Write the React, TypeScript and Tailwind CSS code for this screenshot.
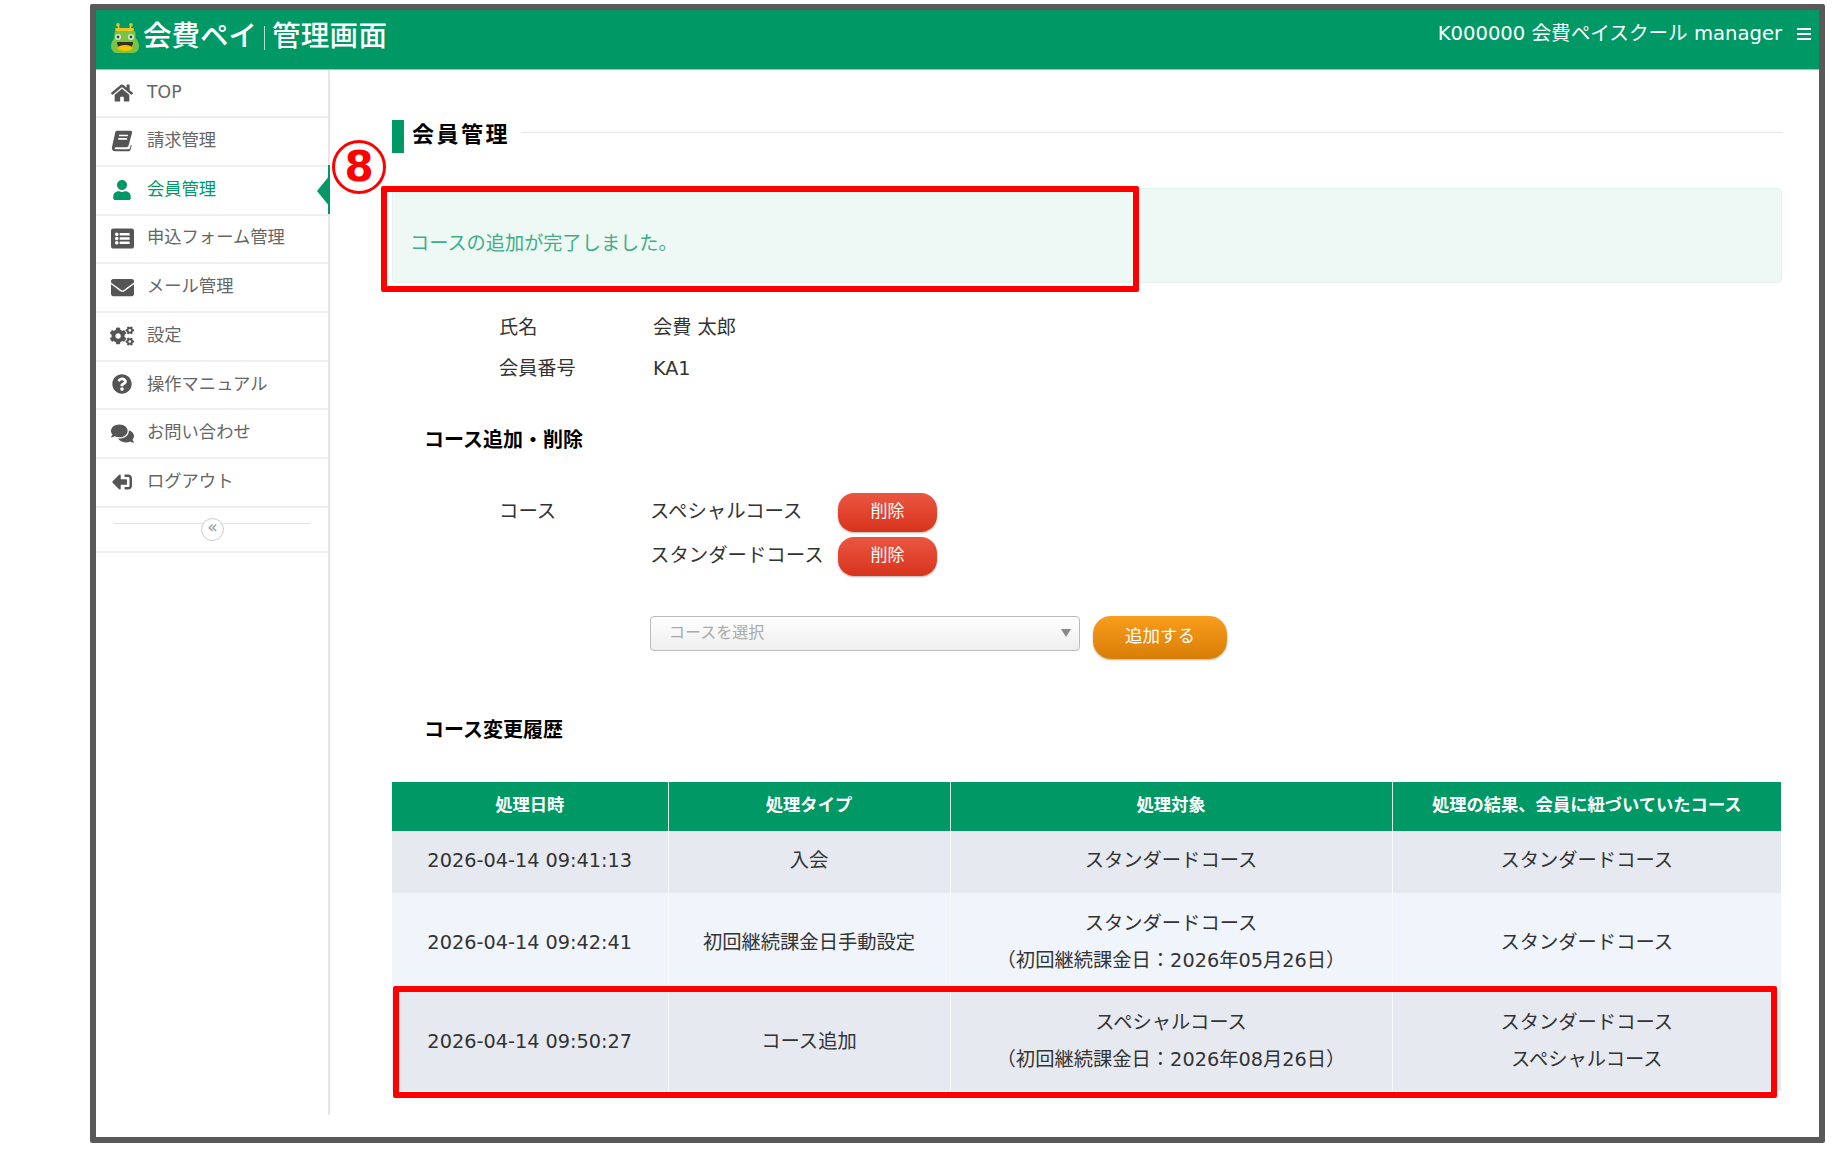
import { FaComments, FaCogs, FaEnvelope, FaHome, FaListAlt, FaQuestionCircle, FaSignOutAlt, FaUser } from "react-icons/fa"

const BookIcon = () => (
  <svg viewBox="0 0 26 26" className="h-[22px] w-[22px]" fill="currentColor">
    <path d="M7 1h16c1.5 0 2.200 1 1.800 2.400l-4 15c-.4 1.400-1.400 2.100-2.800 2.100H6c-1.600 0-2 .9-1.700 1.500.2.500.8.800 1.500.800h15c.8 0 1.300-.4 1.500-1l1.200-4.300 1 .7-1.400 5.200c-.3 1-1.300 1.800-2.500 1.800H5.500C2.500 25.200.5 23 1.200 20L5 3c.2-1.100 1-2 2-2z" />
    <path d="M9.500 6.500h10.500M8.500 10.500h10.500" stroke="#fff" strokeWidth="2" />
  </svg>
)

const menuItems = [
  { name: "TOP", icon: <FaHome className="h-[22px] w-[22px]" /> },
  { name: "請求管理", icon: <BookIcon /> },
  { name: "会員管理", icon: <FaUser className="h-[20px] w-[20px]" />, active: true },
  { name: "申込フォーム管理", icon: <FaListAlt className="h-[23px] w-[23px]" /> },
  { name: "メール管理", icon: <FaEnvelope className="h-[23px] w-[23px]" /> },
  { name: "設定", icon: <FaCogs className="h-[24px] w-[24px]" /> },
  { name: "操作マニュアル", icon: <FaQuestionCircle className="h-[20px] w-[20px]" /> },
  { name: "お問い合わせ", icon: <FaComments className="h-[23px] w-[23px]" /> },
  { name: "ログアウト", icon: <FaSignOutAlt className="h-[20px] w-[20px] -scale-x-100" /> },
]

const historyRows = [
  {
    date: "2026-04-14 09:41:13",
    type: "入会",
    target: ["スタンダードコース"],
    result: ["スタンダードコース"],
    className: "h-[62px] bg-[#e6e9f0] [&>td]:pb-[4px]",
  },
  {
    date: "2026-04-14 09:42:41",
    type: "初回継続課金日手動設定",
    target: ["スタンダードコース", "（初回継続課金日：2026年05月26日）"],
    result: ["スタンダードコース"],
    className: "h-[98px] bg-[#f0f4fb]",
  },
  {
    date: "2026-04-14 09:50:27",
    type: "コース追加",
    target: ["スペシャルコース", "（初回継続課金日：2026年08月26日）"],
    result: ["スタンダードコース", "スペシャルコース"],
    className: "h-[100px] bg-[#e6e9f0]",
  },
]

// frog purse mark
const Logo = () => (
  <svg viewBox="0 0 28 30" className="h-[30px] w-[28px]">
    <path d="M8 6 7 2M19 6l1-4" stroke="#e8c520" strokeWidth="1.600" />
    <circle cx="7" cy="1.800" r="1.800" fill="#e8c520" />
    <circle cx="20" cy="1.800" r="1.800" fill="#e8c520" />
    <rect x="4" y="5" width="19" height="3" rx="1.500" fill="#e8c520" />
    <path d="M5 8h18c1 0 1.500 1 1.500 2v5c2 2 3.500 5 3.500 8 0 4-2.500 7-6 7H6c-3.500 0-6-3-6-7 0-3 1.500-6 3.500-8v-5c0-1 .5-2 1.500-2z" fill="#7cc243" />
    <circle cx="7" cy="14" r="3" fill="#d8ecd0" />
    <circle cx="20" cy="14" r="3" fill="#d8ecd0" />
    <circle cx="7" cy="14" r="1.400" fill="#2d4a3a" />
    <circle cx="20" cy="14" r="1.400" fill="#2d4a3a" />
    <path d="M6 19h16c0 4-3 8-8 8s-8-4-8-8z" fill="#33302a" />
    <ellipse cx="14" cy="25" rx="7.500" ry="3" fill="#f5c400" />
  </svg>
)

const SectionHeading = ({ children, className }: { children: string; className: string }) => (
  <h3 className={`ml-[32px] h-[28px] text-[20px] leading-[28px] font-bold text-black ${className}`}>{children}</h3>
)

const DeleteButton = () => (
  <button className="h-[39px] w-[99px] rounded-[16px] bg-gradient-to-b from-[#ea5640] to-[#d8321a] pb-[2px] text-[17px] text-white shadow-[0_1px_2px_rgba(0,0,0,0.3)]">
    削除
  </button>
)

export default function App() {
  return (
    <div className="h-[1149px] w-[1832px] bg-white pt-[4px] pl-[90px] font-['DejaVu_Sans','Noto_Sans_CJK_JP',sans-serif] text-[#333]">
      <div className="flex h-[1139px] w-[1735px] flex-col rounded-[2px] border-[6px] border-[#595959]">
        <header className="flex h-[60px] items-center justify-between border-b border-[#7fd0b4] bg-[#009966] text-white">
          <div className="flex items-center pb-[4px] pl-[15px]">
            <Logo />
            <span className="ml-[4px] text-[28.500px] leading-none font-medium">会費ペイ</span>
            <span className="mx-[7px] h-[24px] w-px bg-white/70" />
            <span className="text-[28.500px] leading-none font-medium tracking-[0.300px]">管理画面</span>
          </div>
          <div className="flex items-center pb-[11px]">
            <span className="text-[19.600px]">K000000 会費ペイスクール manager</span>
            <div className="mr-[8px] ml-[15px] flex h-[12px] w-[14px] flex-col justify-between">
              <span className="h-[2px] bg-white" />
              <span className="h-[2px] bg-white" />
              <span className="h-[2px] bg-white" />
            </div>
          </div>
        </header>

        <div className="flex flex-1">
          <aside className="h-[1045px] w-[234px] border-r-2 border-[#e6e6e6] text-[17.300px] text-[#666]">
            {menuItems.map((item, i) => (
              <div
                key={item.name}
                className={`relative flex items-center border-b-2 border-[#efefef] pb-[1px] ${i === 0 ? "h-[48.200px]" : "h-[48.700px]"} ${item.active ? "text-[#009966]" : ""}`}
              >
                <span className="flex w-[51px] justify-center pl-[1px] text-[#555]">
                  <span className={item.active ? "text-[#009966]" : ""}>{item.icon}</span>
                </span>
                <span>{item.name}</span>
                {item.active && (
                  <>
                    <span className="absolute top-[8px] right-[-2px] h-[32px] w-[13px] bg-[#009966] [clip-path:polygon(100%_0,100%_100%,0_50%)]" />
                    <span className="absolute top-[-2px] right-[-2px] h-[49px] w-[2px] bg-[#009966]" />
                  </>
                )}
              </div>
            ))}
            <div className="relative h-[45px] border-b-2 border-[#efefef]">
              <span className="absolute top-[15px] left-[18px] h-px w-[196px] bg-[#e2e2e2]" />
              <span className="absolute top-[10px] left-[105px] flex h-[23px] w-[23px] items-center justify-center rounded-full border border-[#ccc] bg-white pb-[3px] text-[17px] text-[#999]">
                «
              </span>
            </div>
          </aside>

          <main className="flex-1 pt-[50px] pr-[37px] pl-[62px]">
            <div className="flex h-[33px] items-start">
              <span className="h-[33px] w-[12px] bg-[#009966]" />
              <h2 className="ml-[8px] text-[22px] leading-[29px] font-bold tracking-[2.500px] text-black">会員管理</h2>
              <span className="mt-[12px] ml-[12px] h-[1px] flex-1 bg-[#e8e8e8]" />
            </div>

            <div className="relative mt-[35px] h-[95px] rounded-[4px] border border-[#e4f3ee] bg-[#eef8f5] pt-[41px] pl-[17px] text-[19.200px] leading-[27px] text-[#3fae8a]">
              コースの追加が完了しました。
              <div className="absolute top-[-3px] left-[-12px] h-[106px] w-[758px] rounded-[2px] border-[6px] border-[#ff0000]" />
              <div className="absolute top-[-49px] left-[-61px] flex h-[54px] w-[54px] items-center justify-center rounded-full border-[3px] border-[#ff0000] bg-white text-[42px] leading-none font-bold text-[#ff0000]">
                8
              </div>
            </div>

            <div className="mt-[25px] pl-[107px] text-[19.200px]">
              <div className="flex h-[41px] items-center">
                <span className="w-[154px]">氏名</span>
                <span>会費 太郎</span>
              </div>
              <div className="flex h-[41px] items-center">
                <span className="w-[154px]">会員番号</span>
                <span>KA1</span>
              </div>
            </div>

            <SectionHeading className="mt-[36px]">コース追加・削除</SectionHeading>

            <div className="mt-[39px] pl-[107px] text-[19.400px]">
              <div className="flex items-center">
                <span className="w-[151px] pb-[2px]">コース</span>
                <span className="w-[188px] pb-[2px]">スペシャルコース</span>
                <DeleteButton />
              </div>
              <div className="mt-[5px] flex items-center">
                <span className="w-[151px]" />
                <span className="w-[188px] pb-[2px]">スタンダードコース</span>
                <DeleteButton />
              </div>
            </div>

            <div className="mt-[40px] ml-[258px] flex items-start gap-[13px]">
              <div className="flex h-[35px] w-[430px] items-center justify-between rounded-[4px] border border-[#bbb] bg-gradient-to-b from-white to-[#eee] pr-[8px] pb-[2px] pl-[18px] text-[16px] text-[#aaa]">
                コースを選択
                <svg viewBox="0 0 10 8" className="h-[8px] w-[10px]">
                  <polygon points="0,0 10,0 5,8" fill="#888" />
                </svg>
              </div>
              <button className="h-[43px] w-[134px] rounded-[18px] bg-gradient-to-b from-[#f99d1c] to-[#d97e05] pb-[2px] text-[17.500px] text-white shadow-[0_1px_2px_rgba(0,0,0,0.3)]">
                追加する
              </button>
            </div>

            <SectionHeading className="mt-[57px]">コース変更履歴</SectionHeading>

            <div className="relative mt-[38px]">
              <table className="w-[1389px] table-fixed border-collapse text-center text-[19.300px]">
                <colgroup>
                  <col className="w-[276px]" />
                  <col className="w-[282px]" />
                  <col className="w-[442px]" />
                  <col className="w-[389px]" />
                </colgroup>
                <thead>
                  <tr className="h-[49px] bg-[#009966] text-[17.300px] text-white">
                    {["処理日時", "処理タイプ", "処理対象", "処理の結果、会員に紐づいていたコース"].map((title) => (
                      <th key={title} className="border-x border-[#d5efe5] pb-[2px] font-bold first:border-l-0 last:border-r-0">
                        {title}
                      </th>
                    ))}
                  </tr>
                </thead>
                <tbody className="leading-[37px]">
                  {historyRows.map((row) => (
                    <tr key={row.date} className={row.className}>
                      <td className="border-r border-[#f7f8fa]">{row.date}</td>
                      <td className="border-r border-[#f7f8fa]">{row.type}</td>
                      <td className="border-r border-[#f7f8fa]">
                        {row.target.map((line) => (
                          <div key={line}>{line}</div>
                        ))}
                      </td>
                      <td>
                        {row.result.map((line) => (
                          <div key={line}>{line}</div>
                        ))}
                      </td>
                    </tr>
                  ))}
                </tbody>
              </table>
              <div className="absolute top-[204px] left-[1px] h-[112px] w-[1384px] rounded-[2px] border-[6px] border-[#ff0000]" />
            </div>
          </main>
        </div>
      </div>
    </div>
  )
}
